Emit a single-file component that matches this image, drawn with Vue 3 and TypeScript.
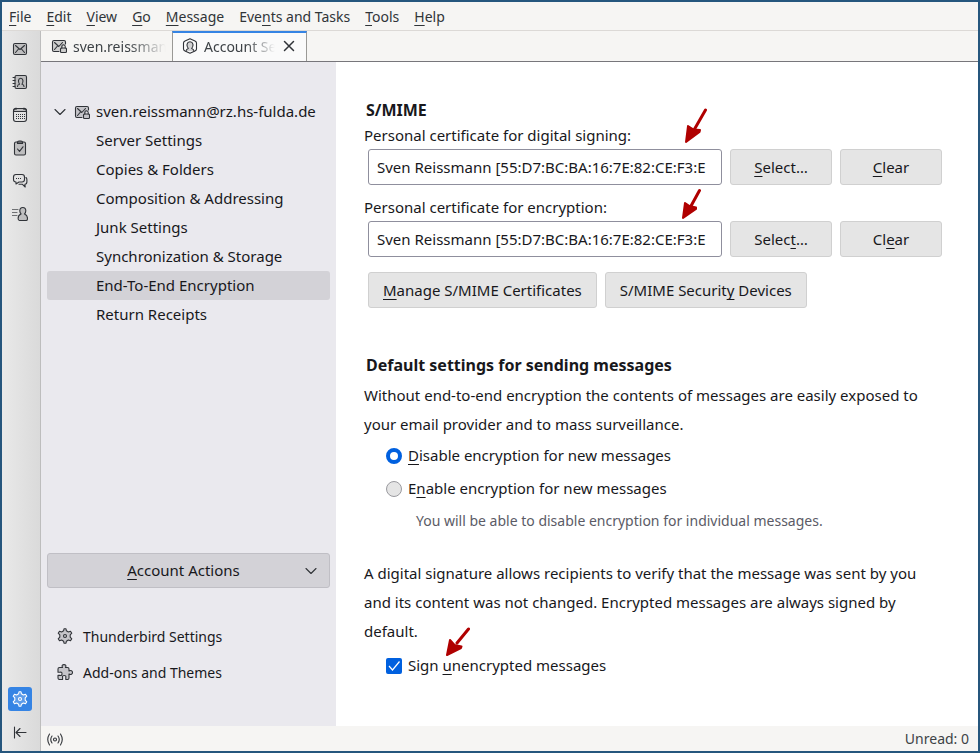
<script setup lang="ts">
import { ref } from 'vue'

type Mnemonic = [before: string, key: string, after: string]

const menus: Mnemonic[] = [
  ['', 'F', 'ile'],
  ['', 'E', 'dit'],
  ['', 'V', 'iew'],
  ['', 'G', 'o'],
  ['', 'M', 'essage'],
  ['Eve', 'n', 'ts and Tasks'],
  ['', 'T', 'ools'],
  ['', 'H', 'elp'],
]

const spaces = ['Mail', 'Address Book', 'Calendar', 'Tasks', 'Chat', 'Identities']

const sections = [
  'Server Settings',
  'Copies & Folders',
  'Composition & Addressing',
  'Junk Settings',
  'Synchronization & Storage',
  'End-To-End Encryption',
  'Return Receipts',
]
const current = ref('End-To-End Encryption')

const certificate = 'Sven Reissmann [55:D7:BC:BA:16:7E:82:CE:F3:E'
const certificates = ref([
  { id: 'signing', label: 'Personal certificate for digital signing:', value: certificate, select: ['', 'S', 'elect…'], clear: ['', 'C', 'lear'] },
  { id: 'encryption', label: 'Personal certificate for encryption:', value: certificate, select: ['Selec', 't', '…'], clear: ['Cl', 'e', 'ar'] },
])

const encryption = ref('disable')
const signMessages = ref(true)
</script>

<template>
  <div class="window">
    <nav class="menubar" aria-label="Menu">
      <button v-for="m in menus" :key="m.join('')" type="button">{{ m[0] }}<u>{{ m[1] }}</u>{{ m[2] }}</button>
    </nav>

    <div class="body">
      <aside class="rail" aria-label="Spaces">
        <button v-for="(s, i) in spaces" :key="s" type="button" class="space" :aria-label="s">
          <svg v-if="i === 0" class="icon" viewBox="0 0 16 16">
            <rect class="tint" x="1.5" y="2.5" width="13" height="11" rx="1.5" />
            <path d="M3.5 4.5 8 8.500l4.500-4M3.500 11.500l3-3.500M12.500 11.500l-3-3.500" />
          </svg>
          <svg v-else-if="i === 1" class="icon" viewBox="0 0 16 16">
            <rect class="tint" x="3" y="1.5" width="11.5" height="13" rx="1.5" />
            <path d="M1 3.500h2M1 6.500h2M1 9.500h2M1 12.500h2M5.500 12.500c0-1.500.6-2 2-2.300C6 8 6 4.200 8.700 4.200S11.500 8 10 10.200c1.400.3 2 .8 2 2.300" />
          </svg>
          <svg v-else-if="i === 2" class="icon" viewBox="0 0 16 16">
            <rect x="1.5" y="1.5" width="13" height="13" rx="2.5" />
            <path class="tint" d="M1.500 4.500V4A2.500 2.500 0 0 1 4 1.500h8A2.500 2.500 0 0 1 14.500 4v.5z" />
            <path d="M4 1v1.500M12 1v1.500" />
            <path class="dots" d="M4 7.500h9M4 9.500h9M4 11.500h9" />
          </svg>
          <svg v-else-if="i === 3" class="icon" viewBox="0 0 16 16">
            <rect class="tint" x="2.500" y="2" width="11" height="13" rx="1.500" />
            <path class="tint" d="M5.500 3.500v-1q0-1.500 1.500-1.500h2q1.500 0 1.500 1.500v1z" />
            <path d="m5.500 9 2 2.300 3.500-4.500" />
          </svg>
          <svg v-else-if="i === 4" class="icon" viewBox="0 0 16 16">
            <path d="M4 1.500h6q2.500 0 2.500 2.500v2.500Q12.500 9 10 9H7l-3 2V9Q1.500 9 1.500 6.500V4Q1.500 1.500 4 1.500z" />
            <path d="M14 4.500c.6.600.9 1.300.9 2.200v2q0 2.300-2 2.500l.3 2.800-3-2.800H7" />
            <path class="dots" d="M4 5.500h6" />
          </svg>
          <svg v-else class="icon" viewBox="0 0 16 16">
            <path d="M0 3.500h6M0 6.500h5M0 9.500h5" opacity=".65" />
            <path class="tint" d="M10.800 1.500c2 0 3 1.500 3 3.300 0 1.400-.5 2.500-1.300 3.200 1.700.6 3 1.700 3 4.300 0 1.200-.4 2.200-1.300 2.200H7.400c-.9 0-1.300-1-1.300-2.200 0-2.600 1.300-3.700 3-4.300-.8-.7-1.300-1.800-1.300-3.200 0-1.800 1-3.300 3-3.300z" />
          </svg>
        </button>
        <span class="fill"></span>
        <button type="button" class="space active" aria-label="Settings">
          <svg class="icon" viewBox="0 0 16 16">
            <path class="tint" d="M6.600 2.800 7 .8h2l.4 2 2 1.200 2.100-.8 1.300 2-1.600 1.600v2.400l1.600 1.600-1.300 2-2.100-.8-2 1.200-.4 2H7l-.4-2-2-1.200-2.100.8-1.300-2 1.600-1.600V6.800L1.200 5.200l1.300-2 2.100.8z" />
            <circle cx="8" cy="8" r="1.500" />
          </svg>
        </button>
        <button type="button" class="space" aria-label="Collapse">
          <svg class="icon" viewBox="0 0 16 16"><path d="M2.500 3v11M14 8.500H4.500M8 4.500l-4 4 4 4" /></svg>
        </button>
      </aside>

      <div class="pane">
        <div class="tabs" role="tablist">
          <div class="tab">
            <svg class="icon" viewBox="0 0 16 16">
              <path class="tint" d="M8 13.500H3Q1.500 13.500 1.500 12V4Q1.500 2.500 3 2.500h10q1.500 0 1.500 1.500v2" />
              <path d="m3.500 4.500 4.300 4 3.700-4M3.500 11.500l3-3.500" />
              <rect class="tint" x="9.500" y="10" width="6" height="4.500" rx="1" /><path d="M10.800 10V8.500a1.700 1.700 0 0 1 3.400 0V10" />
            </svg>
            <button type="button" role="tab" class="tab-name">sven.reissmann</button>
          </div>
          <div class="tab selected">
            <svg class="icon" viewBox="0 0 16 16">
              <path d="M8 .8 13 3q1.500.700 1.500 2v6q0 1.300-1.500 2l-5 2.200L3 13q-1.500-.7-1.500-2V5q0-1.300 1.500-2z" />
              <path class="tint" d="M4 13c.2-1.500.8-2 2.300-2.500-2.400-3-1.500-6.700 1.700-6.700s4.100 3.700 1.700 6.700c1.500.5 2.100 1 2.300 2.500" />
            </svg>
            <button type="button" role="tab" class="tab-name" aria-selected="true">Account Set</button>
            <button type="button" class="close" aria-label="Close tab">
              <svg class="icon" viewBox="0 0 16 16"><path class="bold" d="m3.500 3.500 9 9M12.500 3.500l-9 9" /></svg>
            </button>
          </div>
        </div>

        <div class="account">
          <aside class="sidebar">
            <nav class="tree" aria-label="Accounts">
              <button type="button" class="root">
                <svg class="icon twisty" viewBox="0 0 16 16"><path d="m3 5.500 5 5 5-5" /></svg>
                <svg class="icon" viewBox="0 0 16 16">
                  <path class="tint" d="M8 13.500H3Q1.500 13.500 1.500 12V4Q1.500 2.500 3 2.500h10q1.500 0 1.500 1.500v2" />
                  <path d="m3.500 4.500 4.300 4 3.700-4M3.500 11.500l3-3.500" />
                  <rect class="tint" x="9.500" y="10" width="6" height="4.500" rx="1" /><path d="M10.800 10V8.500a1.700 1.700 0 0 1 3.400 0V10" />
                </svg>
                <span>sven.reissmann@rz.hs-fulda.de</span>
              </button>
              <button v-for="s in sections" :key="s" type="button" class="leaf" :class="{ current: s === current }" @click="current = s">{{ s }}</button>
            </nav>
            <span class="fill"></span>
            <button type="button" class="actions">
              <span><u>A</u>ccount Actions</span>
              <svg class="icon" viewBox="0 0 16 16"><path d="m3 5.500 5 5 5-5" /></svg>
            </button>
            <a href="#settings" class="link">
              <svg class="icon" viewBox="0 0 16 16">
                <path class="tint" d="M6.600 2.800 7 .8h2l.4 2 2 1.200 2.100-.8 1.300 2-1.600 1.600v2.400l1.600 1.600-1.300 2-2.100-.8-2 1.200-.4 2H7l-.4-2-2-1.200-2.100.8-1.300-2 1.600-1.600V6.800L1.200 5.200l1.300-2 2.100.8z" />
                <circle cx="8" cy="8" r="1.500" />
              </svg>
              Thunderbird Settings
            </a>
            <a href="#addons" class="link">
              <svg class="icon" viewBox="0 0 16 16">
                <path class="tint" d="M1 5q0-1.500 1.500-1.500h3C4.500 1.500 5.500.6 7 .6s2.500.9 1.500 2.900h2Q12 3.500 12 5v2c2-1 3.500-.2 3.500 1.500S14 11 12 10v4q0 1.500-1.500 1.500H8.800v-2c.4-1.600-.6-2-1.600-2s-2 .4-1.600 2v2h-3Q1 15.500 1 14v-2.600h2c1.600.4 2-.6 2-1.600s-.4-2-2-1.600H1z" />
              </svg>
              Add-ons and Themes
            </a>
          </aside>

          <main class="content">
            <h2>S/MIME</h2>
            <div v-for="c in certificates" :key="c.id" class="field">
              <label :for="c.id">{{ c.label }}</label>
              <div class="row">
                <input :id="c.id" type="text" readonly :value="c.value" />
                <button type="button" class="push">{{ c.select[0] }}<u>{{ c.select[1] }}</u>{{ c.select[2] }}</button>
                <button type="button" class="push" @click="c.value = ''">{{ c.clear[0] }}<u>{{ c.clear[1] }}</u>{{ c.clear[2] }}</button>
              </div>
            </div>
            <div class="row manage">
              <button type="button" class="push"><u>M</u>anage S/MIME Certificates</button>
              <button type="button" class="push">S/MIME Securit<u>y</u> Devices</button>
            </div>

            <h2 class="defaults">Default settings for sending messages</h2>
            <p>Without end-to-end encryption the contents of messages are easily exposed to your email provider and to mass surveillance.</p>
            <label class="option"><input v-model="encryption" type="radio" name="encryption" value="disable" /><span><u>D</u>isable encryption for new messages</span></label>
            <label class="option"><input v-model="encryption" type="radio" name="encryption" value="enable" /><span>E<u>n</u>able encryption for new messages</span></label>
            <div class="hint">You will be able to disable encryption for individual messages.</div>
            <p class="signature">A digital signature allows recipients to verify that the message was sent by you and its content was not changed. Encrypted messages are always signed by default.</p>
            <label class="option sign">
              <span class="check">
                <input v-model="signMessages" type="checkbox" />
                <svg v-if="signMessages" viewBox="0 0 16 16"><path d="m3 8 3.500 4L13.500 3.500" /></svg>
              </span>
              <span>Sign <u>u</u>nencrypted messages</span>
            </label>

            <svg class="arrows" width="644" height="664" aria-hidden="true">
              <path class="shaft" d="M369.500 48 358 68M363.500 128.500 355 144M132.500 567 121 581" />
              <path class="head" d="m350 80 2-16 5.500 3.500 6.500.5-.5 2zM347 156l2-15 4.500 3 6.500 1.500v1.500zM111 593l3-15 4.500 5 7 1.500-.5 1.500z" />
            </svg>
          </main>
        </div>

        <footer class="status">
          <svg class="icon" viewBox="0 0 16 16">
            <circle cx="8" cy="8.500" r="1.500" />
            <path d="M5 5q-2.500 3.500 0 7M11 5q2.500 3.500 0 7M2.500 3q-3.500 5.500 0 11M13.500 3q3.500 5.500 0 11" />
          </svg>
          <span>Unread: 0</span>
        </footer>
      </div>
    </div>
  </div>
</template>

<style>
body {
  margin: 0;
}
</style>

<style scoped>
* {
  box-sizing: border-box;
}
.window {
  display: flex;
  flex-direction: column;
  min-height: 100vh;
  border: 2px solid #25567d;
  background: #f6f5f3;
  color: #18181c;
  font: 15px/29px "Noto Sans", sans-serif;
}
button {
  padding: 0;
  border: 0;
  background: none;
  color: inherit;
  font: inherit;
}
u {
  text-underline-offset: 3px;
  text-decoration-thickness: 1px;
  text-decoration-skip-ink: none;
}
.icon {
  display: block;
  flex: none;
  width: 16px;
  height: 16px;
  fill: none;
  stroke: #303338;
  stroke-width: 1.1;
  stroke-linejoin: round;
  stroke-linecap: round;
}
.tint {
  fill: #30333833;
}
.bold {
  stroke-width: 1.5;
}
.dots {
  stroke-dasharray: 1 1;
  stroke-linecap: butt;
}
.fill {
  flex: 1;
}
.menubar {
  display: flex;
  gap: 15px;
  height: 29px;
  padding: 0 7px;
  border-bottom: 1px solid #dcd9d6;
  color: #303438;
  font-size: 14px;
}
.body {
  display: flex;
  flex: 1;
}
.rail {
  display: flex;
  flex-direction: column;
  align-items: center;
  gap: 9px;
  width: 39px;
  padding: 6px 2px 7px 0;
  border-right: 1px solid #bdbdbd;
  background: linear-gradient(90deg, #e9e9e9, #dadada);
}
.space {
  display: grid;
  place-items: center;
  width: 24px;
  height: 24px;
  border-radius: 3px;
}
.active {
  background: #3584e4;
}
.active .icon {
  stroke: #fff;
}
.active .tint {
  fill: #ffffff33;
}
.pane {
  display: flex;
  flex: 1;
  flex-direction: column;
  min-width: 0;
}
.tabs {
  display: flex;
  height: 31px;
  border-bottom: 1px solid #77767b;
  color: #3d4246;
  font-size: 14px;
}
.tab {
  display: flex;
  align-items: center;
  width: 131px;
  padding: 0 6px 0 10px;
  gap: 6px;
}
.tab-name {
  flex: 1;
  overflow: hidden;
  text-align: left;
  white-space: nowrap;
  mask-image: linear-gradient(90deg, #000 60%, transparent);
}
.selected {
  width: 135px;
  padding: 0 9px 2px;
  border: 1px solid #9a9996;
  border-top: 2px solid #3584e4;
  border-bottom: 0;
  background: #fafafa;
}
.account {
  display: flex;
  flex: 1;
}
.sidebar {
  display: flex;
  flex: none;
  flex-direction: column;
  width: 295px;
  padding: 35px 6px 36px;
  background: #eae9ee;
}
.tree {
  display: flex;
  flex-direction: column;
}
.root {
  display: flex;
  align-items: center;
  gap: 6px;
  padding-left: 5px;
  white-space: nowrap;
}
.leaf {
  padding-left: 49px;
  border-radius: 3px;
  text-align: left;
}
.current {
  background: #d3d2d7;
}
.actions {
  display: flex;
  align-items: center;
  height: 35px;
  margin-bottom: 30px;
  padding: 0 10px 0 16px;
  border: 1px solid #c0bfc5;
  border-radius: 3px;
  background: #d3d2d7;
}
.actions span {
  flex: 1;
}
.link {
  display: flex;
  align-items: center;
  gap: 10px;
  height: 36px;
  padding-left: 10px;
  color: inherit;
  font-size: 14px;
  text-decoration: none;
}
.content {
  position: relative;
  flex: 1;
  min-width: 0;
  padding: 34px 36px 44px 28px;
  background: #fff;
}
h2 {
  margin: 0 2px;
  font-size: 16px;
  line-height: 28px;
}
.field {
  margin-bottom: 11px;
}
.field label {
  display: block;
  margin-bottom: 3px;
  line-height: 22px;
}
.row {
  display: flex;
  gap: 8px;
  padding-left: 4px;
}
.row input {
  flex: 1;
  min-width: 0;
  height: 36px;
  padding: 0 8px;
  border: 1px solid #8f8f9d;
  border-radius: 3px;
  background: #fff;
  color: inherit;
  font: inherit;
}
.push {
  min-width: 102px;
  height: 36px;
  padding: 0 14px;
  border: 1px solid #d0d0d0;
  border-radius: 3px;
  background: #e5e5e5;
}
.manage {
  margin-top: 15px;
}
.defaults {
  margin-top: 43px;
  margin-bottom: 2px;
}
p {
  margin: 0;
}
.option {
  display: flex;
  align-items: center;
  gap: 6px;
  height: 33px;
  padding-left: 22px;
}
.option input {
  flex: none;
  width: 16px;
  height: 16px;
  margin: 0;
  border: 1px solid #9a9a9f;
  border-radius: 50%;
  background: #e5e5e5;
  appearance: none;
}
.option input:checked {
  border: 4px solid #0060df;
  background: #fff;
}
.check {
  display: grid;
}
.check > * {
  grid-area: 1 / 1;
}
.check svg {
  z-index: 1;
  width: 16px;
  height: 16px;
  fill: none;
  stroke: #fff;
  stroke-width: 1.2;
}
.option .check input {
  border-radius: 2px;
}
.option .check input:checked {
  background: #0060df;
}
.hint {
  padding-left: 52px;
  color: #5b5b66;
  font-size: 14px;
  line-height: 32px;
}
.signature {
  margin-top: 22px;
}
.sign {
  margin-top: 3px;
}
.arrows {
  position: absolute;
  top: 0;
  left: 0;
  pointer-events: none;
}
.shaft {
  fill: none;
  stroke: #b00000;
  stroke-width: 3;
  stroke-linecap: round;
}
.head {
  fill: #b00000;
  stroke: #b00000;
  stroke-width: 2;
  stroke-linejoin: round;
}
.status {
  display: flex;
  align-items: center;
  justify-content: space-between;
  height: 25px;
  padding: 0 9px 0 6px;
  color: #3d4246;
  font-size: 14px;
}
</style>
